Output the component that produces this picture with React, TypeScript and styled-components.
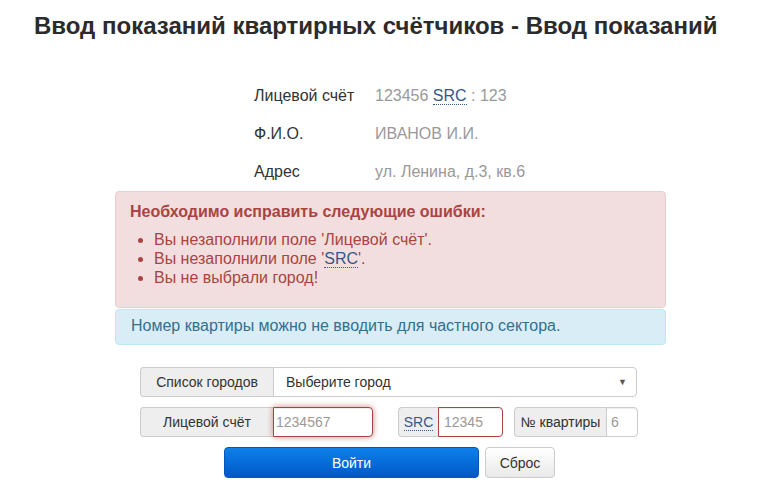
import styled, { createGlobalStyle } from 'styled-components';

const GlobalStyle = createGlobalStyle`
  body {
    margin: 0;
    background: #fff;
    font-family: "Liberation Sans", Arial, sans-serif;
    color: #333;
  }
  * {
    box-sizing: border-box;
  }
`;

const Title = styled.h1`
  margin: 12px 0 0;
  padding-left: 34px;
  font-size: 24px;
  line-height: 28px;
  font-weight: bold;
  color: #2b2b2b;
`;

const Content = styled.div`
  width: 551px;
  margin: 37px 0 0 115px;
`;

const InfoTable = styled.div`
  display: grid;
  grid-template-columns: 121px auto;
  padding-left: 139px;
  font-size: 16px;
`;

const InfoLabel = styled.div`
  height: 38px;
  line-height: 38px;
  color: #333;
`;

const InfoValue = styled.div`
  height: 38px;
  line-height: 38px;
  color: #999;
`;

const Abbr = styled.abbr`
  color: #365789;
  text-decoration: none;
  border-bottom: 1px dotted #365789;
  cursor: help;
`;

const Alert = styled.div<{ $kind: 'danger' | 'info' }>`
  border: 1px solid ${(p) => (p.$kind === 'danger' ? '#ebccd1' : '#bce8f1')};
  background: ${(p) => (p.$kind === 'danger' ? '#f2dede' : '#d9edf7')};
  color: ${(p) => (p.$kind === 'danger' ? '#a94442' : '#31708f')};
  border-radius: 4px;
  font-size: 16px;
  line-height: 19px;
  padding: ${(p) => (p.$kind === 'danger' ? '10px 14px 10px' : '6px 15px 9px')};
  margin-bottom: 1px;
`;

const AlertTitle = styled.div`
  font-weight: bold;
`;

const ErrorList = styled.ul`
  margin: 9px 0 10px;
  padding-left: 24px;
  li {
    line-height: 19px;
  }
`;

const Form = styled.form`
  display: flex;
  flex-direction: column;
  gap: 10px;
  margin: 22px 0 0 25px;
  font-size: 14px;
`;

const Row = styled.div`
  display: flex;
  align-items: stretch;
`;

const Group = styled.div<{ $gap?: number }>`
  display: flex;
  height: 30px;
  margin-left: ${(p) => p.$gap ?? 0}px;
`;

const Addon = styled.span<{ $w: number }>`
  display: flex;
  align-items: center;
  justify-content: center;
  width: ${(p) => p.$w}px;
  border: 1px solid #ccc;
  border-right: none;
  border-radius: 4px 0 0 4px;
  background: #eee;
  color: #333;
  font-size: 14px;
`;

const Input = styled.input<{ $w: number; $pad: number; $error?: boolean; $focus?: boolean }>`
  width: ${(p) => p.$w}px;
  height: 30px;
  padding: 0 4px 0 ${(p) => p.$pad}px;
  border: 1px solid ${(p) => (p.$error ? '#a94442' : '#ccc')};
  border-radius: 0 4px 4px 0;
  font-family: "Liberation Sans", Arial, sans-serif;
  font-size: 14px;
  color: #555;
  outline: none;
  box-shadow: ${(p) =>
    p.$focus ? 'inset 0 1px 1px rgba(0,0,0,.075), 0 0 6px #ce8483' : 'inset 0 1px 1px rgba(0,0,0,.075)'};
  &::placeholder {
    color: #999;
  }
`;

const SelectBox = styled.div`
  display: flex;
  align-items: center;
  width: 364px;
  padding: 0 9px 0 12px;
  border: 1px solid #ccc;
  border-radius: 0 4px 4px 0;
  color: #333;
`;

const Arrow = styled.span`
  margin-left: auto;
  font-size: 9px;
  color: #555;
`;

const Buttons = styled.div`
  display: flex;
  gap: 6px;
  padding-left: 84px;
`;

const Button = styled.button<{ $primary?: boolean; $w: number }>`
  width: ${(p) => p.$w}px;
  height: 31px;
  border-radius: 4px;
  font-family: "Liberation Sans", Arial, sans-serif;
  font-size: 14px;
  cursor: pointer;
  border: 1px solid ${(p) => (p.$primary ? '#0357b8' : '#ccc')};
  color: ${(p) => (p.$primary ? '#fff' : '#333')};
  background: ${(p) =>
    p.$primary
      ? 'linear-gradient(to bottom, #0d80ea 0%, #0058c8 100%)'
      : 'linear-gradient(to bottom, #ffffff 0%, #e9e9e9 100%)'};
`;

export default function App() {
  return (
    <>
      <GlobalStyle />
      <Title>Ввод показаний квартирных счётчиков - Ввод показаний</Title>
      <Content>
        <InfoTable>
          <InfoLabel>Лицевой счёт</InfoLabel>
          <InfoValue>
            123456 <Abbr title="Код">SRC</Abbr> : 123
          </InfoValue>
          <InfoLabel>Ф.И.О.</InfoLabel>
          <InfoValue>ИВАНОВ И.И.</InfoValue>
          <InfoLabel>Адрес</InfoLabel>
          <InfoValue>ул. Ленина, д.3, кв.6</InfoValue>
        </InfoTable>

        <Alert $kind="danger">
          <AlertTitle>Необходимо исправить следующие ошибки:</AlertTitle>
          <ErrorList>
            <li>Вы незаполнили поле 'Лицевой счёт'.</li>
            <li>
              Вы незаполнили поле '<Abbr title="Код">SRC</Abbr>'.
            </li>
            <li>Вы не выбрали город!</li>
          </ErrorList>
        </Alert>
        <Alert $kind="info">Номер квартиры можно не вводить для частного сектора.</Alert>

        <Form onSubmit={(e) => e.preventDefault()}>
          <Row>
            <Group>
              <Addon $w={133}>Список городов</Addon>
              <SelectBox>
                Выберите город
                <Arrow>▼</Arrow>
              </SelectBox>
            </Group>
          </Row>
          <Row>
            <Group>
              <Addon $w={133}>Лицевой счёт</Addon>
              <Input $w={100} $pad={2} $error $focus placeholder="1234567" />
            </Group>
            <Group $gap={25}>
              <Addon $w={40}>
                <Abbr title="Код">SRC</Abbr>
              </Addon>
              <Input $w={65} $pad={5} $error placeholder="12345" />
            </Group>
            <Group $gap={11}>
              <Addon $w={92}>№ квартиры</Addon>
              <Input $w={32} $pad={4} placeholder="6" />
            </Group>
          </Row>
          <Buttons>
            <Button type="submit" $primary $w={255}>
              Войти
            </Button>
            <Button type="reset" $w={70}>
              Сброс
            </Button>
          </Buttons>
        </Form>
      </Content>
    </>
  );
}
